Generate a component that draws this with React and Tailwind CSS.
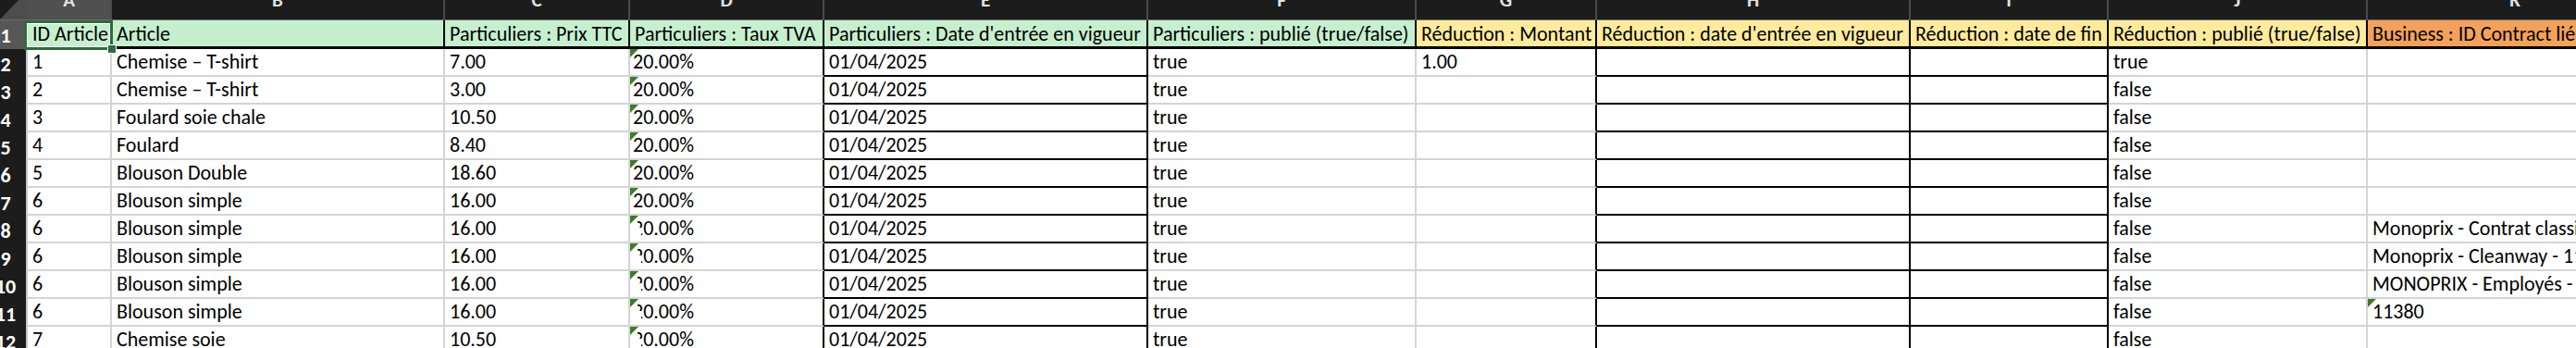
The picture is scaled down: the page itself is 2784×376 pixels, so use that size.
import React from 'react';

const COLS = [
  { key: 'A', w: 'w-[91px]' },
  { key: 'B', w: 'w-[360px]' },
  { key: 'C', w: 'w-[200px]' },
  { key: 'D', w: 'w-[210px]' },
  { key: 'E', w: 'w-[350px]' },
  { key: 'F', w: 'w-[290px]' },
  { key: 'G', w: 'w-[195px]' },
  { key: 'H', w: 'w-[339px]' },
  { key: 'I', w: 'w-[214px]' },
  { key: 'J', w: 'w-[280px]' },
  { key: 'K', w: 'w-[320px]' },
];

const GREEN = 'bg-[#c6efce]';
const YELLOW = 'bg-[#ffeb9c]';
const ORANGE = 'bg-[#f4a259]';

const HEAD = [
  { t: 'ID Article', bg: GREEN },
  { t: 'Article', bg: GREEN },
  { t: 'Particuliers : Prix TTC', bg: GREEN },
  { t: 'Particuliers : Taux TVA', bg: GREEN },
  { t: "Particuliers : Date d'entrée en vigueur", bg: GREEN },
  { t: 'Particuliers : publié (true/false)', bg: GREEN },
  { t: 'Réduction : Montant', bg: YELLOW },
  { t: "Réduction : date d'entrée en vigueur", bg: YELLOW },
  { t: 'Réduction : date de fin', bg: YELLOW },
  { t: 'Réduction : publié (true/false)', bg: YELLOW },
  { t: 'Business : ID Contract lié', bg: ORANGE },
];

const D = '01/04/2025';
const DATA = [
  ['1', 'Chemise – T-shirt', '7.00', '20.00%', D, 'true', '1.00', '', '', 'true', ''],
  ['2', 'Chemise – T-shirt', '3.00', '20.00%', D, 'true', '', '', '', 'false', ''],
  ['3', 'Foulard soie chale', '10.50', '20.00%', D, 'true', '', '', '', 'false', ''],
  ['4', 'Foulard', '8.40', '20.00%', D, 'true', '', '', '', 'false', ''],
  ['5', 'Blouson Double', '18.60', '20.00%', D, 'true', '', '', '', 'false', ''],
  ['6', 'Blouson simple', '16.00', '20.00%', D, 'true', '', '', '', 'false', ''],
  ['6', 'Blouson simple', '16.00', '20.00%', D, 'true', '', '', '', 'false', 'Monoprix - Contrat classique - 11380'],
  ['6', 'Blouson simple', '16.00', '20.00%', D, 'true', '', '', '', 'false', 'Monoprix - Cleanway - 11380'],
  ['6', 'Blouson simple', '16.00', '20.00%', D, 'true', '', '', '', 'false', 'MONOPRIX - Employés - 11380'],
  ['6', 'Blouson simple', '16.00', '20.00%', D, 'true', '', '', '', 'false', '11380'],
  ['7', 'Chemise soie', '10.50', '20.00%', D, 'true', '', '', '', 'false', ''],
];

const BLACK_RIGHT = new Set([3, 4, 6, 7, 8]);
const BLACK_BOTTOM = new Set([4, 7, 8]);

function Tri() {
  return (
    <svg className="absolute left-0 top-0" width="9" height="9" viewBox="0 0 9 9">
      <polygon points="0,0 9,0 0,9" fill="#3b7d2b" />
    </svg>
  );
}

function Corner() {
  return (
    <div className="relative w-[30px] shrink-0 h-full bg-[#4d4d4d] border-b border-b-[#6b6b6b]">
      <svg className="absolute left-0 top-0" width="28" height="21" viewBox="0 0 28 21">
        <polygon points="0,21 0,0 20,0" fill="#1c1c1c" />
      </svg>
    </div>
  );
}

export default function App() {
  return (
    <div className="relative w-[2784px] h-[376px] overflow-hidden bg-white [font-family:Carlito,Calibri,Lato,'Liberation_Sans',sans-serif]">
      {/* column letters */}
      <div className="flex h-[22px] bg-[#1c1c1c]">
        <Corner />
        {COLS.map((c, i) => (
          <div
            key={c.key}
            className={`${c.w} shrink-0 h-full overflow-hidden flex justify-center border-r-2 border-r-[#4a4a4a] border-b border-b-[#6b6b6b] ${i === 0 ? 'bg-[#505050]' : ''}`}
          >
            <span className="-mt-[10px] text-[21px] leading-none font-semibold text-[#e2e2e2]">{c.key}</span>
          </div>
        ))}
      </div>

      {/* header row 1 */}
      <div className="flex h-[31px]">
        <div className="w-[30px] shrink-0 h-full overflow-hidden bg-[#575757] border-r-2 border-r-[#c8c8c8]">
          <div className="w-[44px] -ml-[16px] h-full flex justify-center items-end pb-[3px] text-[22px] leading-none font-bold text-white">1</div>
        </div>
        {HEAD.map((h, i) => (
          <div
            key={i}
            className={`${COLS[i].w} shrink-0 h-full flex items-end pl-[5px] pb-[2px] whitespace-nowrap overflow-hidden text-[22px] leading-none text-black border-r-2 border-r-black border-b-[3px] border-b-black ${h.bg}`}
          >
            {h.t}
          </div>
        ))}
      </div>

      {/* data rows */}
      {DATA.map((row, r) => (
        <div key={r} className="flex h-[30px]">
          <div className="w-[30px] shrink-0 h-full overflow-hidden bg-[#1c1c1c] border-r-2 border-r-[#c8c8c8]">
            <div className="w-[44px] -ml-[16px] h-full flex justify-center items-end pb-[2px] text-[22px] leading-none font-bold text-white">{r + 2}</div>
          </div>
          {row.map((v, i) => (
            <div
              key={i}
              className={`relative ${COLS[i].w} shrink-0 h-full flex items-end ${i === 3 ? 'pl-[3px]' : 'pl-[5px]'} pb-[3px] whitespace-nowrap overflow-hidden text-[22px] leading-none text-black border-r-2 border-b-2 ${BLACK_RIGHT.has(i) ? 'border-r-black' : 'border-r-[#d4d4d4]'} ${BLACK_BOTTOM.has(i) ? 'border-b-black' : 'border-b-[#d4d4d4]'}`}
            >
              {v}
              {i === 3 && r >= 6 && (
                <>
                  <span className="absolute left-0 top-0 w-[8px] h-full bg-white" />
                  <span className="absolute left-0 top-[13px] w-[12px] h-[15px] bg-white" />
                </>
              )}
              {(i === 3 || (i === 10 && v === '11380')) && <Tri />}
            </div>
          ))}
        </div>
      ))}

      {/* selection on A1 */}
      <div className="absolute left-[26px] top-[22px] w-[96px] h-[32px] border-[3px] border-[#2f6b3b] shadow-[inset_0_0_0_1px_white]" />
      <div className="absolute left-[117px] top-[49px] w-[8px] h-[8px] bg-[#2f6b3b] outline outline-1 outline-white" />
    </div>
  );
}
